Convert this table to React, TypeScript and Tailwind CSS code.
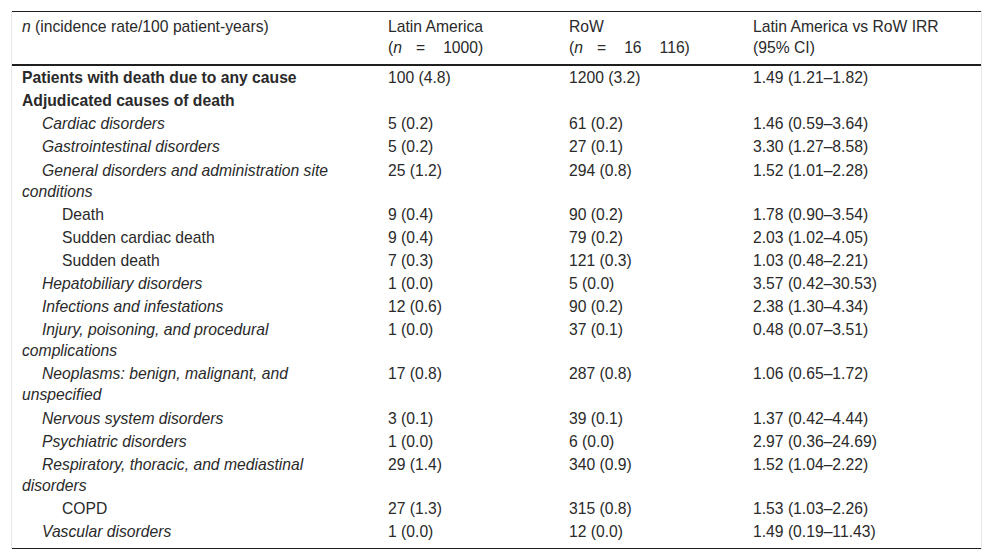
import React from 'react';

type Row = {
  label: string;
  kind: 'bold' | 'cat' | 'sub';
  la: string;
  row: string;
  irr: string;
};

const rows: Row[] = [
  { label: 'Patients with death due to any cause', kind: 'bold', la: '100 (4.8)', row: '1200 (3.2)', irr: '1.49 (1.21–1.82)' },
  { label: 'Adjudicated causes of death', kind: 'bold', la: '', row: '', irr: '' },
  { label: 'Cardiac disorders', kind: 'cat', la: '5 (0.2)', row: '61 (0.2)', irr: '1.46 (0.59–3.64)' },
  { label: 'Gastrointestinal disorders', kind: 'cat', la: '5 (0.2)', row: '27 (0.1)', irr: '3.30 (1.27–8.58)' },
  { label: 'General disorders and administration site conditions', kind: 'cat', la: '25 (1.2)', row: '294 (0.8)', irr: '1.52 (1.01–2.28)' },
  { label: 'Death', kind: 'sub', la: '9 (0.4)', row: '90 (0.2)', irr: '1.78 (0.90–3.54)' },
  { label: 'Sudden cardiac death', kind: 'sub', la: '9 (0.4)', row: '79 (0.2)', irr: '2.03 (1.02–4.05)' },
  { label: 'Sudden death', kind: 'sub', la: '7 (0.3)', row: '121 (0.3)', irr: '1.03 (0.48–2.21)' },
  { label: 'Hepatobiliary disorders', kind: 'cat', la: '1 (0.0)', row: '5 (0.0)', irr: '3.57 (0.42–30.53)' },
  { label: 'Infections and infestations', kind: 'cat', la: '12 (0.6)', row: '90 (0.2)', irr: '2.38 (1.30–4.34)' },
  { label: 'Injury, poisoning, and procedural complications', kind: 'cat', la: '1 (0.0)', row: '37 (0.1)', irr: '0.48 (0.07–3.51)' },
  { label: 'Neoplasms: benign, malignant, and unspecified', kind: 'cat', la: '17 (0.8)', row: '287 (0.8)', irr: '1.06 (0.65–1.72)' },
  { label: 'Nervous system disorders', kind: 'cat', la: '3 (0.1)', row: '39 (0.1)', irr: '1.37 (0.42–4.44)' },
  { label: 'Psychiatric disorders', kind: 'cat', la: '1 (0.0)', row: '6 (0.0)', irr: '2.97 (0.36–24.69)' },
  { label: 'Respiratory, thoracic, and mediastinal disorders', kind: 'cat', la: '29 (1.4)', row: '340 (0.9)', irr: '1.52 (1.04–2.22)' },
  { label: 'COPD', kind: 'sub', la: '27 (1.3)', row: '315 (0.8)', irr: '1.53 (1.03–2.26)' },
  { label: 'Vascular disorders', kind: 'cat', la: '1 (0.0)', row: '12 (0.0)', irr: '1.49 (0.19–11.43)' },
];

export default function App() {
  return (
    <div className="min-h-[560px] w-[992px] bg-white pt-[11px] pl-[11px] text-[#2a2a2a] font-['Liberation_Sans',Arial,sans-serif] text-[15.7px] leading-[21px]">
      <div className="w-[971px] border-x border-[#e8e8e8]">
        <table className="w-[969px] table-fixed border-collapse">
          <colgroup>
            <col className="w-[366px]" />
            <col className="w-[181px]" />
            <col className="w-[184px]" />
            <col className="w-[238px]" />
          </colgroup>
          <thead>
            <tr className="border-t border-b-2 border-[#1f1f1f] align-top text-left">
              <th className="pl-[10px] pr-[20px] pt-[4px] pb-[6px] font-normal">
                <i>n</i> (incidence rate/100 patient-years)
              </th>
              <th className="px-[10px] pt-[4px] pb-[6px] font-normal">
                Latin America
                <br />
                (<i>n</i>
                <span className="inline-block w-[14px]" />=
                <span className="inline-block w-[18px]" />1000)
              </th>
              <th className="px-[10px] pt-[4px] pb-[6px] font-normal">
                RoW
                <br />
                (<i>n</i>
                <span className="inline-block w-[14px]" />=
                <span className="inline-block w-[18px]" />16
                <span className="inline-block w-[18px]" />116)
              </th>
              <th className="px-[10px] pt-[4px] pb-[6px] font-normal">
                Latin America vs RoW IRR
                <br />
                (95% CI)
              </th>
            </tr>
          </thead>
          <tbody className="border-b border-[#1f1f1f]">
            {rows.map((r, i) => {
              const last = i === rows.length - 1;
              const pad = last ? 'pt-[1px] pb-[6px]' : 'pt-[1px] pb-[1.125px]';
              const labelCls =
                r.kind === 'bold' ? 'font-bold' : r.kind === 'cat' ? 'italic indent-5' : 'indent-10';
              return (
                <tr key={i} className="align-top">
                  <td className={`pl-[10px] pr-[20px] ${pad} ${labelCls}`}>{r.label}</td>
                  <td className={`px-[10px] ${pad}`}>{r.la}</td>
                  <td className={`px-[10px] ${pad}`}>{r.row}</td>
                  <td className={`px-[10px] ${pad}`}>{r.irr}</td>
                </tr>
              );
            })}
          </tbody>
        </table>
      </div>
    </div>
  );
}
